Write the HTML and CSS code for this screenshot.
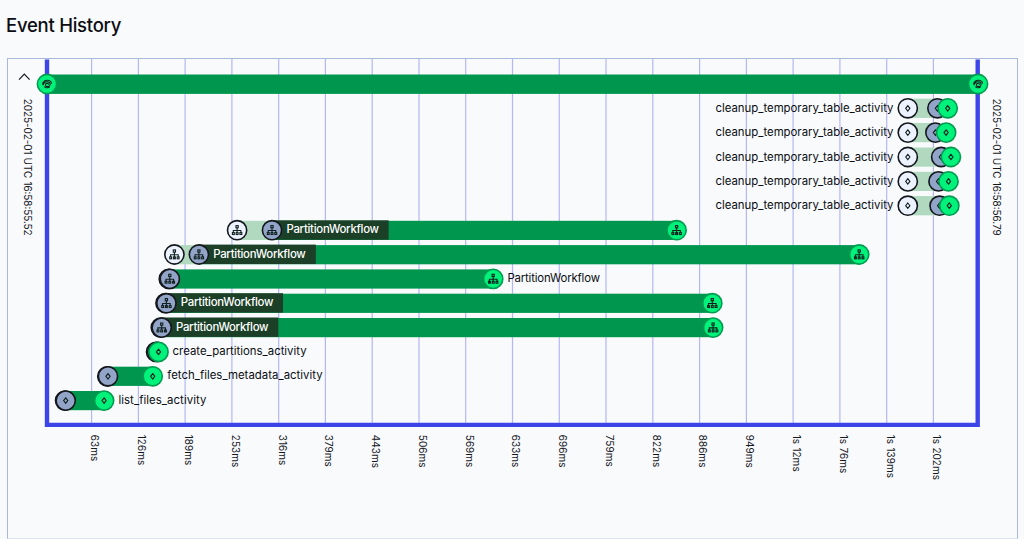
FILE: index.html
```html
<!DOCTYPE html>
<html lang="en">
<head>
<meta charset="utf-8">
<title>Event History</title>
<link rel="stylesheet" href="styles.css">
</head>
<body>
<main class="page">
  <h1 class="title">Event History</h1>
  <section class="panel">
    <svg class="timeline" viewBox="8 59 1009 479" role="img" aria-label="Event timeline">
      <defs>
        <g id="tree" class="icon">
          <rect x="-1.1" y="-4.6" width="2.2" height="2.2"/>
          <path d="M0-2.4V2.4M-3.8 2.4V.3H3.8V2.4"/>
          <rect x="-4.7" y="2.4" width="1.9" height="1.9"/>
          <rect x="-.95" y="2.4" width="1.9" height="1.9"/>
          <rect x="2.8" y="2.4" width="1.9" height="1.9"/>
        </g>
        <path id="diamond" class="icon" d="M0-2.7L2.1 0L0 2.7L-2.1 0Z"/>
        <g id="spiral" class="icon">
          <path d="M-4.5.5C-4.2-2.4-1.8-4 .8-3.7C3.2-3.4 4.5-1.9 4.4-.4M-3.8 1.2C-3.5-1-1.8-2.4.3-2.3C2.4-2.2 3.4-.8 3 .8C2.6 2.4.8 3-.6 2.4C-1.9 1.8-1.9 0-.7-.6C.5-1.2 1.7-.2 1.3.7M-2.6 2.6C-1.4 4 1.1 4.2 2.8 2.9"/>
        </g>
        <g id="wait-tree"><circle class="dot wait" r="9.6"/><use href="#tree"/></g>
        <g id="start-tree"><circle class="dot start" r="9.6"/><use href="#tree"/></g>
        <g id="done-tree"><circle class="dot done" r="9.6"/><use href="#tree"/></g>
        <g id="wait-act"><circle class="dot wait" r="9.6"/><use href="#diamond"/></g>
        <g id="start-act"><circle class="dot start" r="9.6"/><use href="#diamond"/></g>
        <g id="done-act"><circle class="dot done" r="9.6"/><use href="#diamond"/></g>
        <g id="done-flow"><circle class="dot done" r="9.6"/><use href="#spiral"/></g>
      </defs>

      <path class="grid" d="M91.6 59V423M138.4 59V423M185.1 59V423M231.9 59V423M278.7 59V423M325.4 59V423M372.2 59V423M419 59V423M465.7 59V423M512.5 59V423M559.3 59V423M606 59V423M652.8 59V423M699.6 59V423M746.4 59V423M793.1 59V423M839.9 59V423M886.7 59V423M933.4 59V423"/>
      <path class="axis" d="M47 59.5V424.9H977.7V59.5"/>
      <path class="chevron" d="M19 79.6L24.3 74.2L29.6 79.6"/>

      <rect class="bar" x="47" y="74.5" width="931" height="19.4"/>
      <use href="#done-flow" x="47" y="84"/>
      <use href="#done-flow" x="978" y="84"/>

      <rect class="queue" x="908" y="98.7" width="30" height="19.2"/>
      <rect class="queue" x="908" y="123" width="28" height="19.2"/>
      <rect class="queue" x="908" y="147.5" width="33" height="19.2"/>
      <rect class="queue" x="908" y="171.8" width="30" height="19.2"/>
      <rect class="queue" x="908" y="196.1" width="31" height="19.2"/>
      <use href="#wait-act" x="907.8" y="108.3"/><use href="#start-act" x="937.4" y="108.3"/><use href="#done-act" x="947.7" y="108.3"/>
      <use href="#wait-act" x="907.8" y="132.6"/><use href="#start-act" x="935.4" y="132.6"/><use href="#done-act" x="946.1" y="132.6"/>
      <use href="#wait-act" x="907.8" y="157"/><use href="#start-act" x="941.2" y="157"/><use href="#done-act" x="950.9" y="157"/>
      <use href="#wait-act" x="907.8" y="181.4"/><use href="#start-act" x="938.5" y="181.4"/><use href="#done-act" x="948.5" y="181.4"/>
      <use href="#wait-act" x="907.8" y="205.7"/><use href="#start-act" x="939.6" y="205.7"/><use href="#done-act" x="949.3" y="205.7"/>
      <g class="label">
        <text x="715.5" y="111.5" textLength="178">cleanup_temporary_table_activity</text>
        <text x="715.5" y="135.9" textLength="178">cleanup_temporary_table_activity</text>
        <text x="715.5" y="160.5" textLength="178">cleanup_temporary_table_activity</text>
        <text x="715.5" y="184.5" textLength="178">cleanup_temporary_table_activity</text>
        <text x="715.5" y="208.9" textLength="178">cleanup_temporary_table_activity</text>
      </g>

      <rect class="queue" x="237" y="220.8" width="35" height="19.2"/>
      <rect class="bar" x="272" y="220.8" width="404.6" height="19.2"/>
      <rect class="plate" x="272" y="220.3" width="116.6" height="19.4"/>
      <use href="#wait-tree" x="237.1" y="230.2"/><use href="#start-tree" x="272" y="230.2"/><use href="#done-tree" x="676.6" y="230.2"/>

      <rect class="queue" x="174.5" y="245.1" width="24" height="19.2"/>
      <rect class="bar" x="198.8" y="245.1" width="660.5" height="19.2"/>
      <rect class="plate" x="198.8" y="244.6" width="117" height="19.4"/>
      <use href="#wait-tree" x="174.4" y="254.5"/><use href="#start-tree" x="198.9" y="254.5"/><use href="#done-tree" x="859.2" y="254.5"/>

      <rect class="bar" x="169" y="269.4" width="324" height="19.2"/>
      <use href="#wait-tree" x="168.8" y="278.9"/><use href="#start-tree" x="169.8" y="278.9"/><use href="#done-tree" x="493.2" y="278.9"/>

      <rect class="bar" x="166" y="293.7" width="546" height="19.2"/>
      <rect class="plate" x="166" y="293.2" width="117" height="19.4"/>
      <use href="#wait-tree" x="165.5" y="303.2"/><use href="#start-tree" x="166.4" y="303.2"/><use href="#done-tree" x="712.3" y="303.2"/>

      <rect class="bar" x="161.5" y="318" width="551.5" height="19.2"/>
      <rect class="plate" x="161.5" y="317.5" width="116.8" height="19.4"/>
      <use href="#wait-tree" x="160.8" y="327.6"/><use href="#start-tree" x="161.7" y="327.6"/><use href="#done-tree" x="713.1" y="327.6"/>

      <use href="#start-act" x="156.1" y="351.9"/><use href="#start-act" x="157.3" y="351.9"/><use href="#done-act" x="158.5" y="351.9"/>

      <rect class="bar" x="107" y="366.7" width="46" height="19.2"/>
      <use href="#wait-act" x="107.3" y="376.3"/><use href="#start-act" x="108" y="376.3"/><use href="#done-act" x="152.7" y="376.3"/>

      <rect class="bar" x="65" y="391" width="39" height="19.2"/>
      <use href="#wait-act" x="65.1" y="400.6"/><use href="#start-act" x="65.7" y="400.6"/><use href="#done-act" x="104.1" y="400.6"/>

      <g class="label inverse">
        <text x="286.4" y="233.3" textLength="92.6">PartitionWorkflow</text>
        <text x="213.2" y="257.7" textLength="92.6">PartitionWorkflow</text>
        <text x="180.8" y="306.4" textLength="92.6">PartitionWorkflow</text>
        <text x="175.9" y="330.7" textLength="92.6">PartitionWorkflow</text>
      </g>
      <g class="label">
        <text x="507.4" y="282" textLength="92.6">PartitionWorkflow</text>
        <text x="172.6" y="355.1" textLength="134">create_partitions_activity</text>
        <text x="167.3" y="379.4" textLength="155.3">fetch_files_metadata_activity</text>
        <text x="118.4" y="403.8" textLength="88">list_files_activity</text>
      </g>

      <g class="tick">
        <text transform="translate(23.6 98.7) rotate(90)" textLength="137">2025-02-01 UTC 16:58:55.52</text>
        <text transform="translate(993.2 98.7) rotate(90)" textLength="137">2025-02-01 UTC 16:58:56.79</text>
        <text transform="translate(91.4 434.8) rotate(90)">63ms</text>
        <text transform="translate(138.2 434.8) rotate(90)">126ms</text>
        <text transform="translate(184.9 434.8) rotate(90)">189ms</text>
        <text transform="translate(231.7 434.8) rotate(90)">253ms</text>
        <text transform="translate(278.5 434.8) rotate(90)">316ms</text>
        <text transform="translate(325.2 434.8) rotate(90)">379ms</text>
        <text transform="translate(372 434.8) rotate(90)">443ms</text>
        <text transform="translate(418.8 434.8) rotate(90)">506ms</text>
        <text transform="translate(465.5 434.8) rotate(90)">569ms</text>
        <text transform="translate(512.3 434.8) rotate(90)">633ms</text>
        <text transform="translate(559.1 434.8) rotate(90)">696ms</text>
        <text transform="translate(605.8 434.8) rotate(90)">759ms</text>
        <text transform="translate(652.6 434.8) rotate(90)">822ms</text>
        <text transform="translate(699.4 434.8) rotate(90)">886ms</text>
        <text transform="translate(746.2 434.8) rotate(90)">949ms</text>
        <text transform="translate(792.9 434.8) rotate(90)">1s 12ms</text>
        <text transform="translate(839.7 434.8) rotate(90)">1s 76ms</text>
        <text transform="translate(886.5 434.8) rotate(90)">1s 139ms</text>
        <text transform="translate(933.2 434.8) rotate(90)">1s 202ms</text>
      </g>
    </svg>
  </section>
</main>
</body>
</html>
```

FILE: styles.css
```css
* { box-sizing: border-box; }

body {
  margin: 0;
  background: #f8fafc;
  color: #0b0d12;
  font-family: Inter, "Liberation Sans", sans-serif;
}

.page {
  display: flex;
  flex-direction: column;
  height: 539px;
  padding: 14px 5px 0 6px;
  overflow: hidden;
}

.title {
  margin: 0 0 22px;
  font-size: 18.5px;
  font-weight: 500;
  line-height: 22px;
  letter-spacing: -0.25px;
}

.panel {
  width: 1011px;
  height: 481px;
  margin-left: 1px;
  border: 1px solid #a9b8dc;
  border-bottom-color: #dbe3f1;
}

.timeline {
  display: block;
  width: 1009px;
  height: 479px;
}

.grid { fill: none; stroke: #b5b7f5; stroke-width: 1.2; }
.axis { fill: none; stroke: #3d45e8; stroke-width: 4.4; }
.chevron { fill: none; stroke: #15171c; stroke-width: 1.2; }

.bar { fill: #00964e; }
.queue { fill: #b0d9c0; }
.plate { fill: #1c3f27; }

.dot { stroke-width: 1.6; }
.wait { fill: #edf2ff; stroke: #14171c; }
.start { fill: #93a4c9; stroke: #14171c; }
.done { fill: #00f27b; stroke: #009b4f; }

.icon { fill: none; stroke: #10201e; stroke-width: 1.1; }

.label { font-size: 11.4px; fill: #0b0d12; }
.inverse { fill: #fff; font-weight: 500; }
.tick { font-size: 10px; fill: #15171c; word-spacing: 0.5px; }
```
